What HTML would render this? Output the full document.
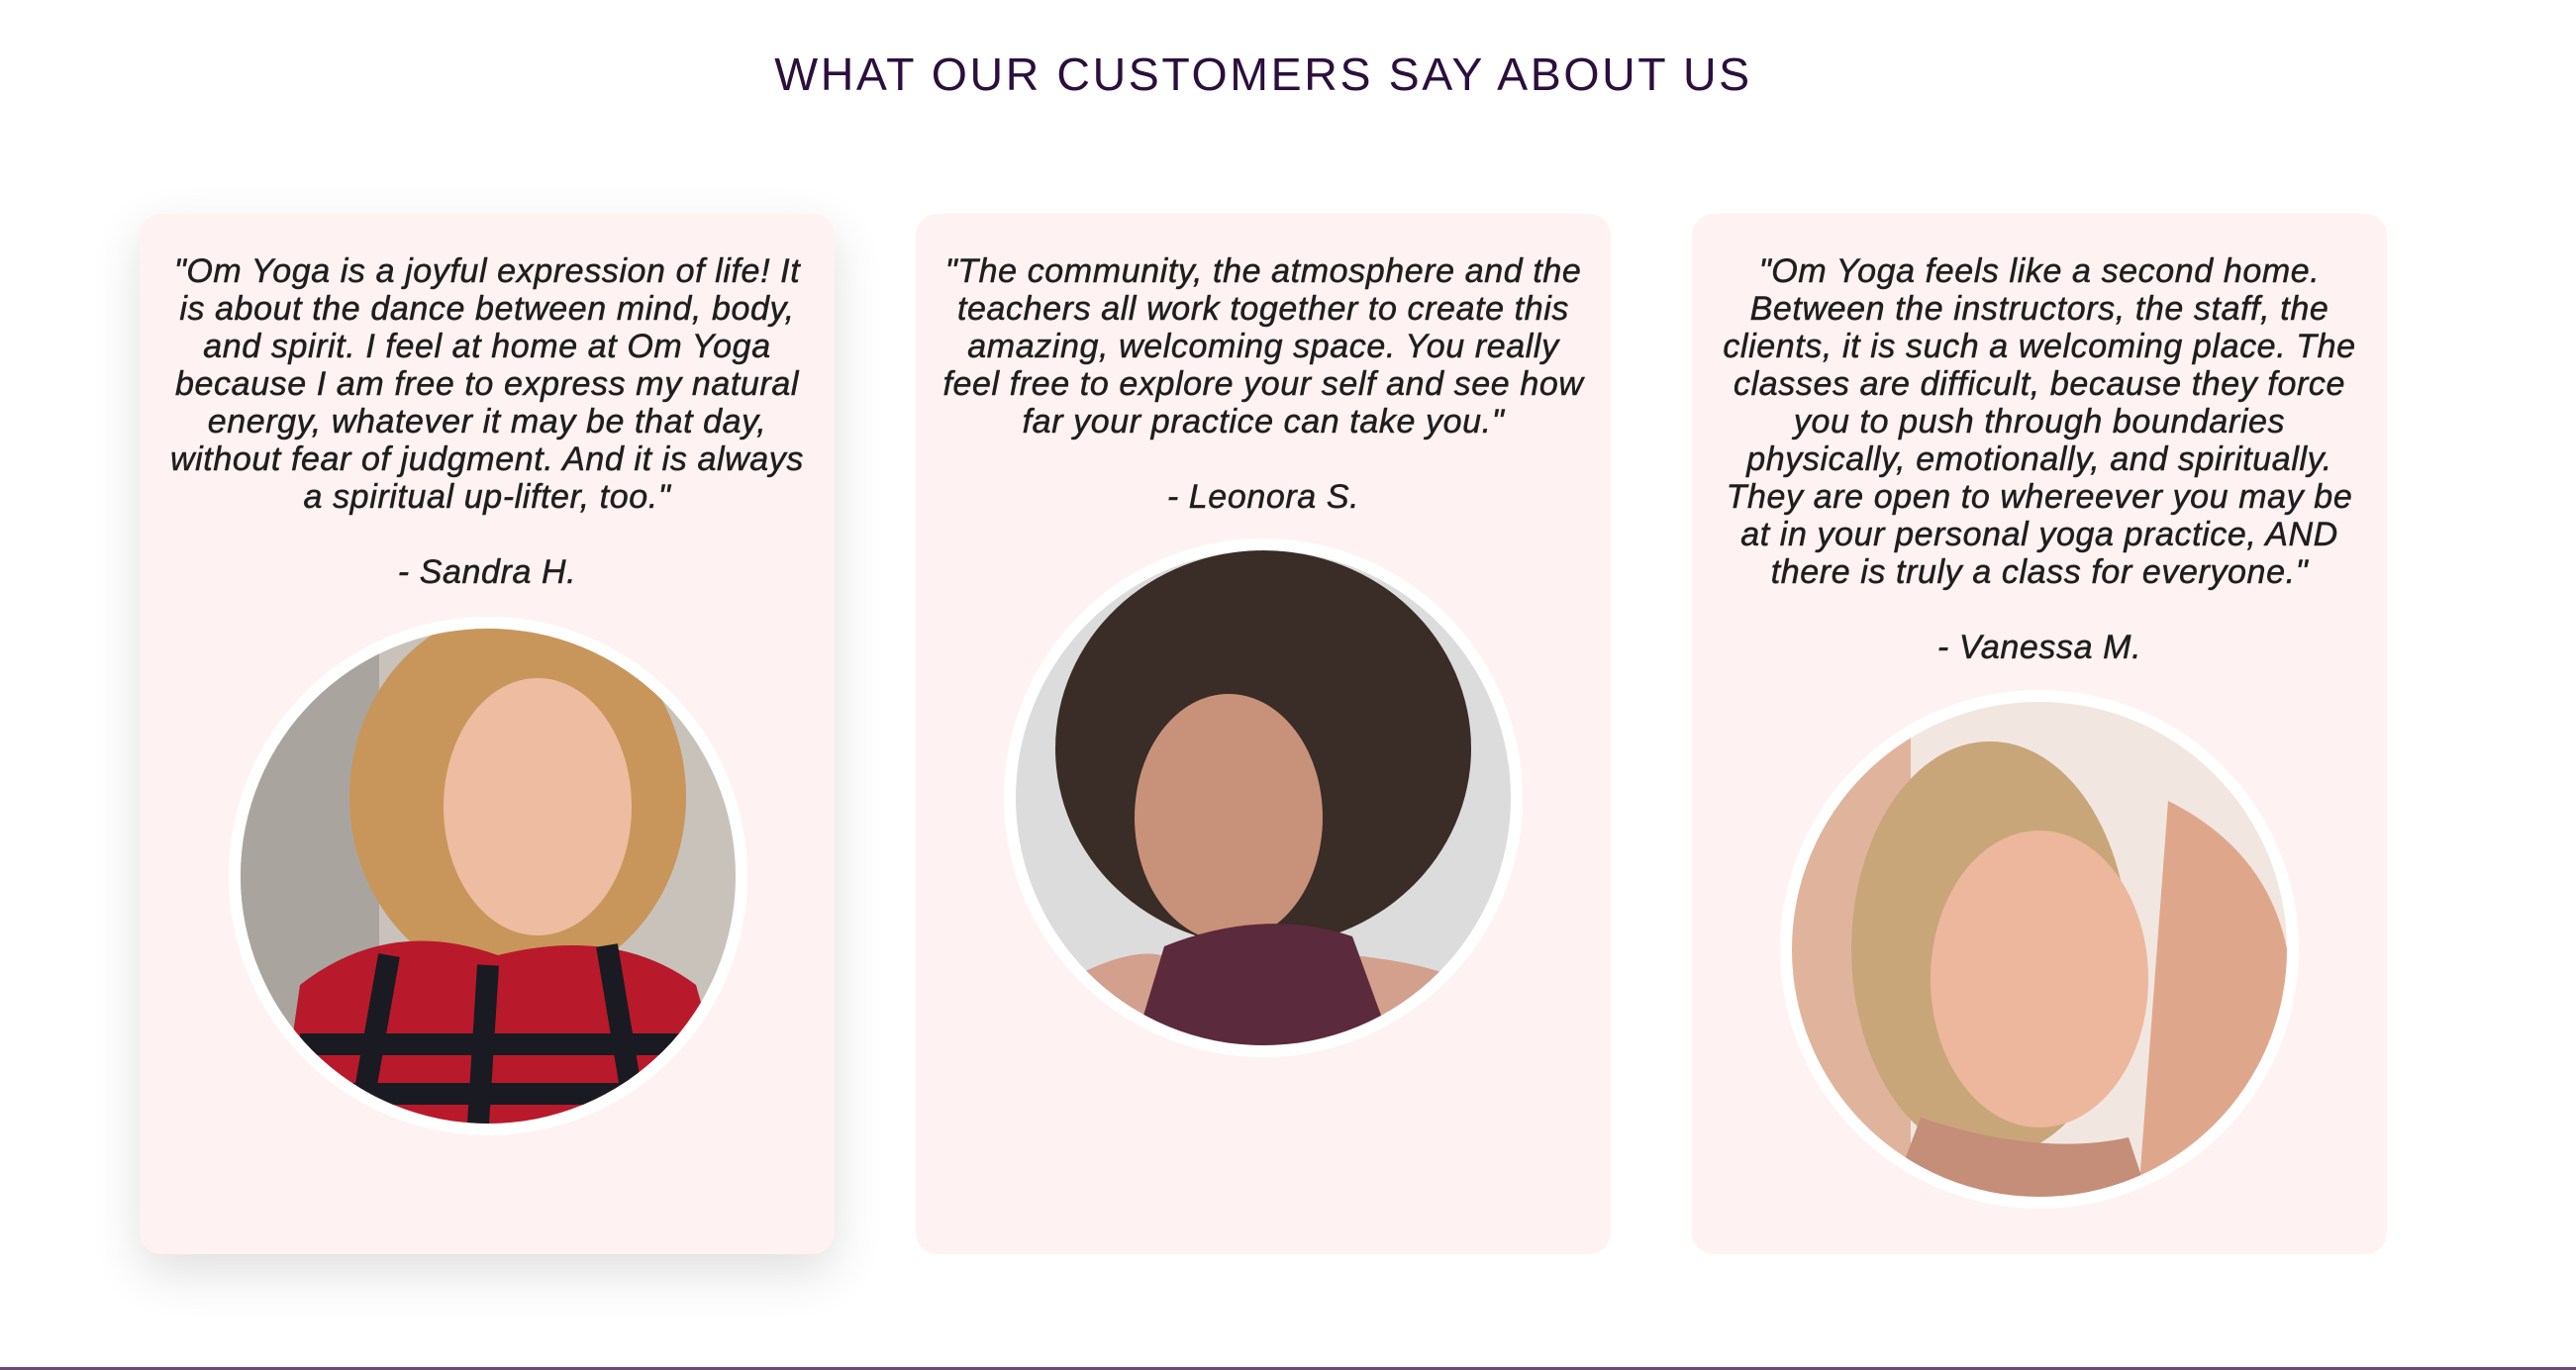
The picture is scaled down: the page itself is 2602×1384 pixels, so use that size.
<!DOCTYPE html>
<html><head><meta charset="utf-8"><style>
html,body{margin:0;padding:0;background:#fff;width:2602px;height:1384px;overflow:hidden;position:relative}
h1{position:absolute;top:45px;left:-25px;width:2602px;text-align:center;margin:0;font:400 46.5px/60px "Liberation Sans",sans-serif;letter-spacing:2.6px;color:#2b0f3d}
.card{position:absolute;top:216px;width:702px;height:1051px;background:#fff2f2;border-radius:22px}
.c1{left:141px;box-shadow:0 18px 50px rgba(0,0,0,0.13)}
.c2{left:925px}.c3{left:1709px}
.t{position:absolute;left:0;width:100%;top:39px;text-align:center;font:italic 34px/38px "Liberation Sans",sans-serif;color:#1e1e1e;white-space:nowrap;letter-spacing:0.6px;-webkit-text-stroke:0.5px #1e1e1e}
.ph{position:absolute;width:500px;height:500px;border-radius:50%;border:12px solid #fff;overflow:hidden}
.ph svg{display:block}
.line{position:absolute;left:0;bottom:0;width:2602px;height:3px;background:#6b4a73}
</style></head><body>
<h1>WHAT OUR CUSTOMERS SAY ABOUT US</h1>
<div class="card c1"><div class="t">"Om Yoga is a joyful expression of life! It<br>is about the dance between mind, body,<br>and spirit. I feel at home at Om Yoga<br>because I am free to express my natural<br>energy, whatever it may be that day,<br>without fear of judgment. And it is always<br>a spiritual up-lifter, too."<br><br>- Sandra H.</div>
<div class="ph" style="left:90px;top:407px"><svg width="500" height="500"><rect width="500" height="500" fill="#c9c2bb"/><rect width="140" height="500" fill="#a9a59e"/><ellipse cx="280" cy="170" rx="170" ry="190" fill="#c8965a"/><ellipse cx="300" cy="180" rx="95" ry="130" fill="#eebca0"/><path d="M40 500 L60 360 Q150 290 260 330 Q380 300 460 360 L500 500 Z" fill="#b81a2b"/><path d="M60 420 L460 420 M80 470 L480 470 M150 330 L120 500 M250 340 L240 500 M370 320 L400 500" stroke="#1a1a22" stroke-width="22" fill="none"/></svg></div></div>
<div class="card c2"><div class="t">"The community, the atmosphere and the<br>teachers all work together to create this<br>amazing, welcoming space. You really<br>feel free to explore your self and see how<br>far your practice can take you."<br><br>- Leonora S.</div>
<div class="ph" style="left:89px;top:328px"><svg width="500" height="500"><rect width="500" height="500" fill="#dcdcdc"/><ellipse cx="250" cy="200" rx="210" ry="200" fill="#3a2c26"/><ellipse cx="215" cy="270" rx="95" ry="125" fill="#c8927a"/><path d="M40 500 L60 430 Q120 400 150 410 L350 410 Q430 420 460 440 L480 500 Z" fill="#d2a08c"/><path d="M120 500 L150 400 Q250 360 340 390 L380 500 Z" fill="#5b2a3c"/></svg></div></div>
<div class="card c3"><div class="t">"Om Yoga feels like a second home.<br>Between the instructors, the staff, the<br>clients, it is such a welcoming place. The<br>classes are difficult, because they force<br>you to push through boundaries<br>physically, emotionally, and spiritually.<br>They are open to whereever you may be<br>at in your personal yoga practice, AND<br>there is truly a class for everyone."<br><br>- Vanessa M.</div>
<div class="ph" style="left:89px;top:481px"><svg width="500" height="500"><rect width="500" height="500" fill="#f2e6e0"/><path d="M0 0 L120 0 L120 500 L0 500 Z" fill="#e0b49c"/><path d="M380 100 Q480 150 500 250 L500 500 L350 500 Z" fill="#dea78c"/><ellipse cx="200" cy="250" rx="140" ry="210" fill="#c9a67a"/><ellipse cx="250" cy="280" rx="110" ry="150" fill="#ecb79c"/><path d="M100 500 L130 420 Q250 460 340 440 L360 500 Z" fill="#c48e78"/></svg></div></div>
<div class="line"></div>
</body></html>
